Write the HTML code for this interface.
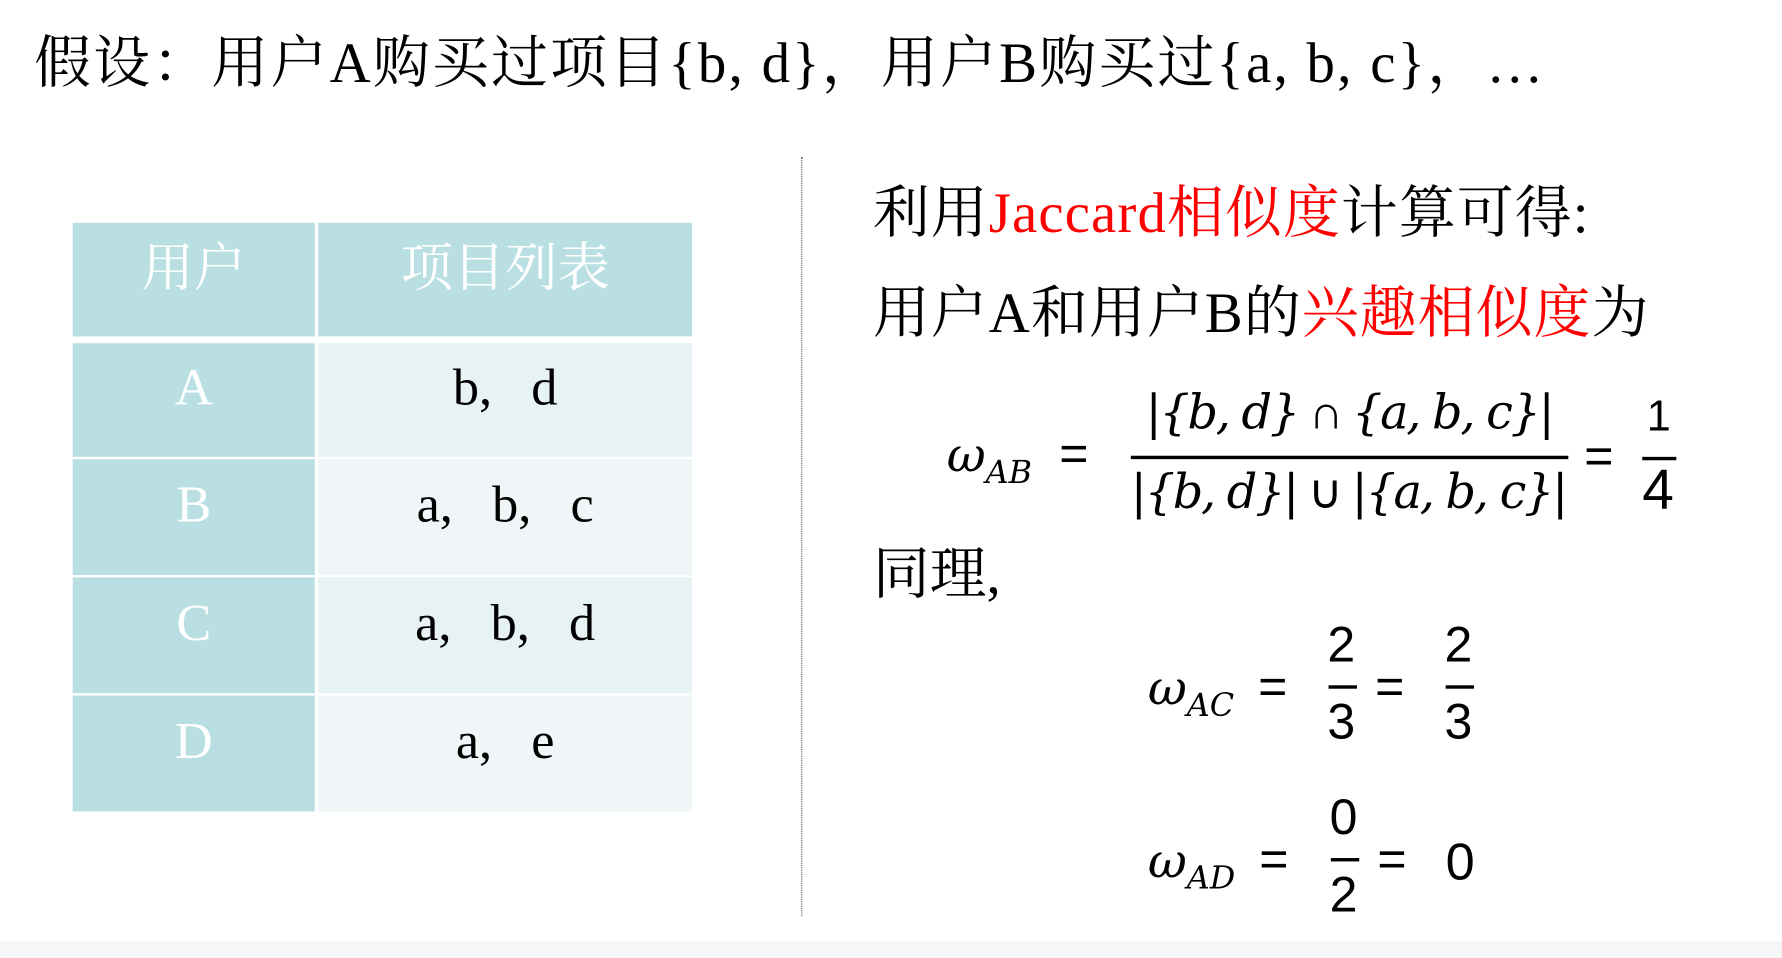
<!DOCTYPE html>
<html><head><meta charset="utf-8"><style>
html,body{margin:0;padding:0;width:1782px;height:958px;overflow:hidden;background:#fff}
#s{position:absolute;left:0;top:0;width:1568px;height:843px;transform:scale(1.13648);transform-origin:0 0;font-family:"Liberation Serif","Noto Serif CJK SC",serif;color:#000}
.a{position:absolute;white-space:nowrap;line-height:1}
.cell{position:absolute;display:flex;align-items:center;justify-content:center;font-size:46px;box-sizing:border-box;padding-bottom:24px}
.m{font-family:"DejaVu Serif","Liberation Serif",serif;font-style:italic}
.n{font-family:"Liberation Sans",sans-serif}
.bar{position:absolute;height:3px;background:#000}
.red{color:#f00}
sub{font-size:28px;vertical-align:-10px;line-height:0}
</style></head><body><div id="s">
<div class="a" style="left:30px;top:30px;font-size:50px;letter-spacing:2px">假设：用户A购买过项目{b, d}，用户B购买过{a, b, c}，…</div>

<div class="cell" style="left:64px;top:196px;width:213px;height:100px;background:#b9dfe3;color:#fff;font-size:46px;padding-bottom:28px">用户</div>
<div class="cell" style="left:280px;top:196px;width:329px;height:100px;background:#b9dfe3;color:#fff;font-size:46px;padding-bottom:28px">项目列表</div>
<div class="cell" style="left:64px;top:302px;width:213px;height:100px;background:#b9dfe3;color:#fff">A</div>
<div class="cell" style="left:280px;top:302px;width:329px;height:100px;background:#e6f2f4">b,&nbsp;&nbsp; d</div>
<div class="cell" style="left:64px;top:404px;width:213px;height:102px;background:#b9dfe3;color:#fff">B</div>
<div class="cell" style="left:280px;top:404px;width:329px;height:102px;background:#f0f6f8">a,&nbsp;&nbsp; b,&nbsp;&nbsp; c</div>
<div class="cell" style="left:64px;top:508px;width:213px;height:102px;background:#b9dfe3;color:#fff">C</div>
<div class="cell" style="left:280px;top:508px;width:329px;height:102px;background:#e6f2f4">a,&nbsp;&nbsp; b,&nbsp;&nbsp; d</div>
<div class="cell" style="left:64px;top:612px;width:213px;height:102px;background:#b9dfe3;color:#fff">D</div>
<div class="cell" style="left:280px;top:612px;width:329px;height:102px;background:#f0f6f8">a,&nbsp;&nbsp; e</div>

<div style="position:absolute;left:705px;top:138px;height:668px;border-left:1px dotted #555"></div>

<div class="a" style="left:768px;top:162px;font-size:50px;letter-spacing:1px">利用<span class="red">Jaccard相似度</span>计算可得:</div>
<div class="a" style="left:768px;top:250px;font-size:50px;letter-spacing:1px">用户A和用户B的<span class="red">兴趣相似度</span>为</div>

<div class="a m" style="left:833px;top:380px;font-size:42px">ω<sub>AB</sub></div>
<div class="a n" style="left:932px;top:378px;font-size:44px">=</div>
<div class="a m" style="left:1008px;top:342px;font-size:42px;letter-spacing:-2px">|{b, d}<span class="n" style="font-style:normal"> ∩ </span>{a, b, c}|</div>
<div class="bar" style="left:995px;top:401px;width:385px"></div>
<div class="a m" style="left:995px;top:412px;font-size:42px;letter-spacing:-2px">|{b, d}|<span class="n" style="font-style:normal"> ∪ </span>|{a, b, c}|</div>
<div class="a n" style="left:1394px;top:380px;font-size:44px">=</div>
<div class="a n" style="left:1449px;top:348px;font-size:38px">1</div>
<div class="bar" style="left:1445px;top:402px;width:30px"></div>
<div class="a n" style="left:1445px;top:406px;font-size:50px">4</div>

<div class="a" style="left:768px;top:480px;font-size:50px">同理,</div>

<div class="a m" style="left:1010px;top:585px;font-size:42px">ω<sub>AC</sub></div>
<div class="a n" style="left:1107px;top:583px;font-size:44px">=</div>
<div class="a n" style="left:1168px;top:546px;font-size:44px">2</div>
<div class="bar" style="left:1169px;top:603px;width:25px"></div>
<div class="a n" style="left:1168px;top:614px;font-size:44px">3</div>
<div class="a n" style="left:1210px;top:583px;font-size:44px">=</div>
<div class="a n" style="left:1271px;top:546px;font-size:44px">2</div>
<div class="bar" style="left:1272px;top:603px;width:25px"></div>
<div class="a n" style="left:1271px;top:614px;font-size:44px">3</div>

<div class="a m" style="left:1010px;top:737px;font-size:42px">ω<sub>AD</sub></div>
<div class="a n" style="left:1108px;top:735px;font-size:44px">=</div>
<div class="a n" style="left:1170px;top:698px;font-size:44px">0</div>
<div class="bar" style="left:1171px;top:755px;width:25px"></div>
<div class="a n" style="left:1170px;top:766px;font-size:44px">2</div>
<div class="a n" style="left:1212px;top:735px;font-size:44px">=</div>
<div class="a n" style="left:1272px;top:735px;font-size:46px">0</div>

<div style="position:absolute;left:0;top:828px;width:1568px;height:15px;background:#f6f6f6"></div>
</div></body></html>
